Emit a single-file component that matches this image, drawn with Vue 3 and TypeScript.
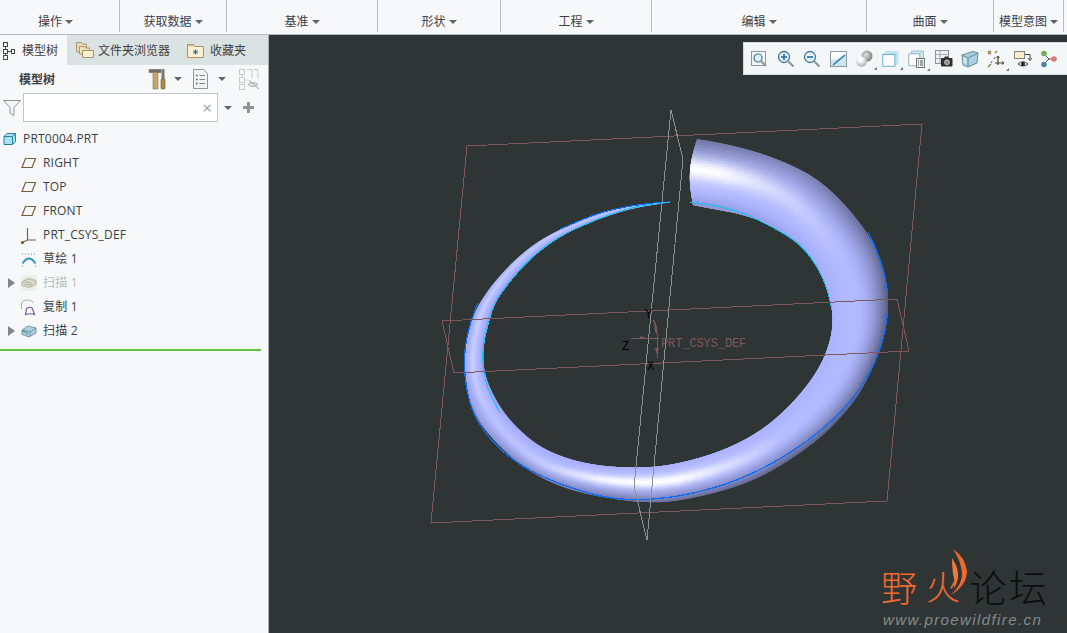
<script setup lang="ts">
// top ribbon groups: label + width up to the next separator
const ribbon = [
  { label: '操作', width: 120 },
  { label: '获取数据', width: 107 },
  { label: '基准', width: 151 },
  { label: '形状', width: 123 },
  { label: '工程', width: 151 },
  { label: '编辑', width: 215 },
  { label: '曲面', width: 127 },
  { label: '模型意图', width: 70 },
]

// ox,oy,ix,iy = outer and inner edge of the tube, hc/ha = highlight centre and strength,
// od/id = how dark the outer and the inner edge get
const stations: number[][] = [
  [670, 201.7, 670, 202.5, 0.5, 0, 0, 0.3],
  [636.7, 204, 636.7, 206.5, 0.4, 0.1, 0, 0.6],
  [603, 211.7, 603, 217, 0.3, 0.15, 0, 0.7],
  [570, 225, 567, 232, 0.3, 0.2, 0, 0.75],
  [543, 237.7, 547, 245, 0.3, 0.2, 0, 0.75],
  [520, 255, 525, 263, 0.3, 0.2, 0, 0.75],
  [500, 275, 510, 282, 0.35, 0.2, 0, 0.75],
  [483, 297, 497, 298, 0.4, 0.25, 0.05, 0.7],
  [475, 312, 491, 313, 0.4, 0.25, 0.1, 0.6],
  [468, 330, 486, 330, 0.45, 0.25, 0.1, 0.6],
  [463, 357, 482, 357, 0.45, 0.25, 0.1, 0.6],
  [465, 383, 485, 380, 0.45, 0.2, 0.2, 0.5],
  [473, 413, 500, 408, 0.5, 0.12, 0.3, 0.35],
  [487, 433, 512, 423, 0.5, 0.1, 0.4, 0.2],
  [510, 457, 533, 443, 0.5, 0.12, 0.5, 0.1],
  [537, 477, 552, 453, 0.5, 0.25, 0.6, 0.1],
  [570, 490, 577, 462, 0.55, 0.55, 0.7, 0.1],
  [603, 498, 606, 467, 0.56, 0.9, 0.75, 0.1],
  [647, 503, 647, 468, 0.57, 1, 0.8, 0.1],
  [673, 502, 673, 465, 0.57, 0.95, 0.85, 0.05],
  [717, 493, 712, 455, 0.58, 0.55, 0.9, 0],
  [757, 480, 745, 441, 0.58, 0.25, 0.95, 0],
  [790, 460, 775, 421, 0.6, 0.05, 1, 0],
  [823, 437, 800, 395, 0.6, 0, 1, 0],
  [847, 410, 815, 375, 0.6, 0, 1, 0],
  [863, 390, 825, 357, 0.6, 0, 1, 0],
  [880, 352, 832, 335, 0.6, 0, 1, 0],
  [887, 323, 833, 318, 0.6, 0, 1, 0],
  [888, 297, 831, 298, 0.6, 0, 1, 0.05],
  [885, 270, 822, 275, 0.6, 0, 0.95, 0.1],
  [875, 245, 808, 252, 0.6, 0.05, 0.9, 0.15],
  [860, 222, 790, 237, 0.55, 0.12, 0.8, 0.25],
  [832, 190, 767, 223, 0.5, 0.25, 0.7, 0.35],
  [808, 173, 745, 215, 0.47, 0.4, 0.6, 0.5],
  [780, 160, 725, 211, 0.45, 0.6, 0.6, 0.6],
  [740, 146, 708, 208, 0.44, 0.95, 0.7, 0.7],
  [697, 139, 693, 205, 0.45, 1, 0.8, 0.7],
]

const BANDS = 24
const SUB = 4

function catmull(a: number, b: number, c: number, d: number, t: number) {
  return 0.5 * (2 * b + (c - a) * t + (2 * a - 5 * b + 4 * c - d) * t * t + (3 * b - a - 3 * c + d) * t * t * t)
}

function resample(rows: number[][], coords: number) {
  const out: number[][] = []
  for (let i = 0; i < rows.length - 1; i++) {
    const p0 = rows[Math.max(i - 1, 0)]
    const p1 = rows[i]
    const p2 = rows[i + 1]
    const p3 = rows[Math.min(i + 2, rows.length - 1)]
    for (let s = 0; s < SUB; s++) {
      const t = s / SUB
      out.push(p1.map((_, k) => (k < coords ? catmull(p0[k], p1[k], p2[k], p3[k], t) : p1[k] + (p2[k] - p1[k]) * t)))
    }
  }
  out.push(rows[rows.length - 1])
  // the measured points are rough, take the lumps out
  for (let pass = 0; pass < 10; pass++) {
    const prev = out.map((r) => r.slice())
    for (let i = 1; i < out.length - 1; i++) {
      for (let k = 0; k < coords; k++) {
        out[i][k] = (prev[i - 1][k] + 2 * prev[i][k] + prev[i + 1][k]) / 4
      }
    }
  }
  return out
}

const dense = resample(stations, 4)

function mix(a: number[], b: number[], t: number) {
  return a.map((c, i) => c + (b[i] - c) * t)
}

function shade(st: number[], v: number) {
  let c = [170, 178, 255]
  const soft = (v - st[4]) / 0.3
  c = mix(c, [198, 204, 255], (0.3 + st[5] * 0.5) * Math.exp(-soft * soft))
  const outer = Math.max(0, 1 - v / 0.55)
  c = mix(c, [92, 97, 132], outer * outer * st[6])
  const inner = Math.max(0, (v - 0.72) / 0.28)
  c = mix(c, [122, 128, 190], inner * inner * st[7])
  const d = (v - st[4]) / 0.15
  c = mix(c, [255, 255, 255], st[5] * Math.exp(-d * d))
  return `rgb(${c.map((n) => Math.round(n)).join(',')})`
}

function at(st: number[], v: number, bulge: number) {
  const x = st[0] + (st[2] - st[0]) * v - bulge * Math.sin(Math.PI * v)
  const y = st[1] + (st[3] - st[1]) * v
  return `${x.toFixed(2)},${y.toFixed(2)}`
}

// the open end of the tube bulges to the left
const bulgeAt = (i: number) => Math.max(0, 5 - (dense.length - 1 - i) * 0.7)

// painted in order, each cell runs under the next one so no seams show through
const quads: { points: string; fill: string }[] = []
for (let i = 0; i < dense.length - 1; i++) {
  const j = Math.min(i + 2, dense.length - 1)
  for (let b = 0; b < BANDS; b++) {
    const v0 = b / BANDS
    const v1 = Math.min(b + 2, BANDS) / BANDS
    const vm = Math.min(b + 1, BANDS) / BANDS
    quads.push({
      points: [
        at(dense[i], v0, bulgeAt(i)),
        at(dense[j], v0, bulgeAt(j)),
        at(dense[j], vm, bulgeAt(j)),
        at(dense[j], v1, bulgeAt(j)),
        at(dense[i], v1, bulgeAt(i)),
        at(dense[i], vm, bulgeAt(i)),
      ].join(' '),
      fill: shade(dense[i], (b + 0.5) / BANDS),
    })
  }
}

function curve(pts: number[][]) {
  return resample(pts, 2).map((p) => `${p[0].toFixed(1)},${p[1].toFixed(1)}`).join(' ')
}

const blueLine = curve([[478, 303], [468, 328], [463, 360], [467, 393], [473, 413], [487, 437], [520, 468], [570, 488], [603, 497], [627, 500], [668, 499], [717, 488], [757, 472], [790, 453], [823, 430], [860, 393], [880, 352], [887, 323], [888, 300], [887, 283], [877, 250], [868, 232]])
const blueTip = curve([[670, 202], [640, 204], [615, 209], [595, 214], [570, 225], [560, 229]])
const cyanLeft = curve([[670, 202], [636, 205.5], [603, 217], [567, 232], [547, 245], [525, 263], [510, 282], [497, 298], [491, 313], [484, 340], [482, 357], [485, 380], [490, 395], [500, 413]])
const cyanRight = curve([[690, 202], [715, 205], [745, 213], [770, 226], [790, 237], [803, 247], [818, 267], [828, 290], [832, 310]])

const tree = [
  { label: 'RIGHT', icon: 'plane' },
  { label: 'TOP', icon: 'plane' },
  { label: 'FRONT', icon: 'plane' },
  { label: 'PRT_CSYS_DEF', icon: 'csys' },
  { label: '草绘 1', icon: 'sketch' },
  { label: '扫描 1', icon: 'sweep', arrow: true, muted: true },
  { label: '复制 1', icon: 'copy' },
  { label: '扫描 2', icon: 'sweep', arrow: true },
]
</script>

<template>
  <div class="app">
    <header class="ribbon">
      <div v-for="g in ribbon" :key="g.label" class="ribbon-group" :style="{ width: g.width + 'px' }">
        <span>{{ g.label }}</span><i class="caret"></i>
      </div>
    </header>

    <div class="body">
      <aside class="panel">
        <div class="tabs">
          <div class="tab active">
            <svg width="15" height="20" viewBox="0 0 15 20" fill="none" stroke="#444" stroke-width="1">
              <rect x="2.5" y="2.5" width="4" height="4" />
              <rect x="2.5" y="9.5" width="4" height="4" />
              <rect x="2.5" y="15.5" width="4" height="4" />
              <rect x="10.5" y="9.5" width="3" height="4" />
              <path d="M4.5 6.500v3M4.500 13.500v2M6.500 11.500h4" />
            </svg>
            <span>模型树</span>
          </div>
          <div class="tab folder-tab">
            <svg width="20" height="20" viewBox="0 0 20 20">
              <path d="M1.500 2.500h5l1 1.500h4v8h-10z" fill="#e9d9ae" stroke="#a89a78" />
              <path d="M4.500 6.500h5l1 1.500h4v6h-10z" fill="#f1e3bd" stroke="#a89a78" />
              <path d="M7.500 10.500h11v7h-11z" fill="#fbf0cf" stroke="#a8926a" />
            </svg>
            <span>文件夹浏览器</span>
          </div>
          <div class="tab fav-tab">
            <svg width="17" height="17" viewBox="0 0 17 17">
              <path d="M0.500 2.500h6l1.500 2h8.500v11h-16z" fill="#fbf1d2" stroke="#a8926a" />
              <path d="M1 3h5.500l1 1.500h-6.500z" fill="#d8c189" />
              <path d="M8.500 7.500v5M6 10h5M6.700 8.200l3.600 3.600M10.300 8.200l-3.600 3.600" stroke="#1b6a8a" stroke-width="0.9" />
            </svg>
            <span>收藏夹</span>
          </div>
        </div>

        <div class="tree-tools">
          <span class="tree-title">模型树</span>
          <svg class="tool-wrench" width="18" height="22" viewBox="0 0 18 22">
            <path d="M1 1.500h12v3h-3v16.500h-5v-16.500h-4z" fill="#c9a468" stroke="#8a7550" stroke-width="0.6" />
            <path d="M1 1.500h12v3h-12z" fill="#6d6d6d" />
            <rect x="13.500" y="1" width="3" height="10" fill="#777" />
            <rect x="13" y="11" width="4" height="10" rx="1" fill="#b48a45" stroke="#6b5530" stroke-width="0.6" />
          </svg>
          <i class="caret tool-caret1"></i>
          <svg class="tool-list" width="17" height="20" viewBox="0 0 17 20">
            <path d="M1.500 0.500h10l4 4v15h-14z" fill="#f0f3f5" stroke="#8d989e" />
            <path d="M4 6.500h1.500M4 10.500h1.500M4 14.500h1.500" stroke="#555" stroke-width="1.400" />
            <path d="M7.500 6.500h5.500M7.500 10.500h5.500M7.500 14.500h5.500" stroke="#7d8b93" />
          </svg>
          <i class="caret tool-caret2"></i>
          <svg class="tool-hide" width="21" height="21" viewBox="0 0 21 21" fill="none" stroke="#c9cccc">
            <rect x="0.500" y="0.500" width="5" height="5" />
            <rect x="0.500" y="8.500" width="5" height="5" />
            <rect x="0.500" y="15.500" width="5" height="5" />
            <path d="M8 0.500h5v9M15 0.500h4v9" />
            <path d="M3 5.500v3M5.500 11h3" />
            <path d="M9 15.500q5-4 10 0q-5 4-10 0z" fill="#e4e6e6" stroke="#a9adad" />
            <path d="M10 11l10 9" stroke="#9aa0a0" />
          </svg>
        </div>

        <div class="filter-row">
          <svg width="18" height="16" viewBox="0 0 18 16" fill="#f4f6f6" stroke="#8d9496">
            <path d="M0.500 0.500h17l-6.500 7v8l-4-2.500v-5.500z" />
          </svg>
          <div class="filter-input"><span class="clear">×</span></div>
          <i class="caret"></i>
          <span class="plus"></span>
        </div>

        <ul class="tree">
          <li class="tree-row root">
            <svg width="14" height="14" viewBox="0 0 14 14">
              <path d="M1 4.500l3-3h8.500v8l-3 3h-8.500z" fill="#a8e2f7" stroke="#2b7f9f" />
              <path d="M1 4.500h8.500v8M9.500 4.500l3-3" fill="none" stroke="#2b7f9f" />
            </svg>
            <span>PRT0004.PRT</span>
          </li>
          <li v-for="item in tree" :key="item.label" class="tree-row" :class="{ muted: item.muted }">
            <i class="expander" :class="{ on: item.arrow }"></i>
            <svg v-if="item.icon === 'plane'" width="16" height="12" viewBox="0 0 16 12" fill="none" stroke="#74603c" stroke-width="1.200">
              <path d="M4.500 1.500h10l-3.500 9h-10z" />
            </svg>
            <svg v-else-if="item.icon === 'csys'" width="16" height="17" viewBox="0 0 16 17" fill="none" stroke="#74603c" stroke-width="1.100">
              <path d="M6.500 1v12M1 15.500l5.500-2.500h8.500" />
              <circle cx="1.500" cy="15.500" r="1" fill="#74603c" />
            </svg>
            <svg v-else-if="item.icon === 'sketch'" width="16" height="16" viewBox="0 0 16 16" fill="none">
              <path d="M1 3h14M1 15h1M14 15h1" stroke="#7c8a90" stroke-dasharray="1 2" />
              <path d="M1.500 12.500q6.500-10 13 0" stroke="#2a93c4" stroke-width="1.800" />
            </svg>
            <svg v-else-if="item.muted" width="16" height="16" viewBox="0 0 16 16" class="muted-icon">
              <rect width="16" height="16" fill="#eceeea" />
              <path d="M1 7l6-3.500 8 2v4l-7 3-7-2z" fill="#d8d8c8" stroke="#b5b5a0" />
              <path d="M4 6.500l6 1.500M3 9l8 1" stroke="#b5b5a0" />
            </svg>
            <svg v-else-if="item.icon === 'copy'" width="16" height="17" viewBox="0 0 16 17" fill="none">
              <path d="M0.500 10v-5q0-3.500 5-4h2q4 .5 4.500 3" stroke="#a8acae" />
              <path d="M4.500 15.500l1-6q3.500-2.500 6 0l2 6q-4.500-1.500-9 0z" stroke="#7d559e" stroke-width="1.200" />
            </svg>
            <svg v-else width="16" height="13" viewBox="0 0 16 13">
              <path d="M1 5l6-4 8 2v5l-7 4-7-2.500z" fill="#a6d2e4" stroke="#72858c" stroke-width="0.800" />
              <path d="M1 5l8 2 6-4M9 7v5" fill="none" stroke="#72858c" stroke-width="0.800" />
              <path d="M1 6l5 1.500v2.500" fill="none" stroke="#2b7f9f" stroke-width="0.800" />
            </svg>
            <span>{{ item.label }}</span>
          </li>
        </ul>
        <div class="tree-end"></div>
      </aside>

      <main class="viewport">
        <svg class="scene" width="798" height="598" viewBox="269 35 798 598">
          <g>
            <polygon v-for="(q, i) in quads" :key="i" :points="q.points" :fill="q.fill" />
          </g>
          <g fill="none" shape-rendering="crispEdges">
            <polyline :points="blueLine" stroke="#0b6ef5" stroke-width="1.300" />
            <polyline :points="blueTip" stroke="#0b6ef5" stroke-width="1.200" />
            <polyline :points="cyanLeft" stroke="#19c2f4" stroke-width="1.100" />
            <polyline :points="cyanRight" stroke="#19c2f4" stroke-width="1.100" />
            <polygon points="467,146 922,124 887,501 431,523" stroke="#7f585c" />
            <polygon points="442,321 897,299 909,351 454,373" stroke="#7f585c" />
            <polygon points="671,110 683,159 647,540 634,487" stroke="#8b9192" />
            <path d="M631 338h28M653 320q4 5 4 14v24" stroke="#7f585c" />
          </g>
          <path d="M640 336l6 2-6 1zM655 348h4l-2 7zM654 323l4 9-3 0z" fill="#7f585c" />
          <text x="661" y="347" class="csys-name">PRT_CSYS_DEF</text>
          <text x="645" y="318" class="axis">Y</text>
          <text x="622" y="350" class="axis">Z</text>
          <text x="647" y="370" class="axis">X</text>
        </svg>

        <div class="view-tools">
          <span class="vt"><svg width="18" height="18" viewBox="0 0 18 18">
            <rect x="1.500" y="1.500" width="14" height="14" fill="#f4f6f8" stroke="#8a99a5" />
            <circle cx="8" cy="8" r="4" fill="#e4f1f8" stroke="#3d7a9a" stroke-width="1.200" />
            <path d="M11 11l5 5" stroke="#8f979c" stroke-width="2" />
          </svg></span>
          <span class="vt"><svg width="18" height="18" viewBox="0 0 18 18">
            <circle cx="7" cy="7" r="5.500" fill="#e4f1f8" stroke="#3d7a9a" stroke-width="1.300" />
            <path d="M4 7h6M7 4v6" stroke="#1d6d96" stroke-width="1.600" />
            <path d="M11 11l5.500 5.500" stroke="#8f979c" stroke-width="2.200" />
          </svg></span>
          <span class="vt"><svg width="18" height="18" viewBox="0 0 18 18">
            <circle cx="7" cy="7" r="5.500" fill="#e4f1f8" stroke="#3d7a9a" stroke-width="1.300" />
            <path d="M4 7h6" stroke="#1d6d96" stroke-width="1.600" />
            <path d="M11 11l5.500 5.500" stroke="#8f979c" stroke-width="2.200" />
          </svg></span>
          <span class="vt"><svg width="17" height="16" viewBox="0 0 17 16">
            <rect width="17" height="16" fill="#8f9a9f" />
            <rect x="1" y="1" width="15" height="14" fill="#fff" />
            <path d="M1 15v-6q8-1 15-6v12z" fill="#cfe3ee" />
            <path d="M3 14l12-10" stroke="#1f7fa8" stroke-width="1.500" />
          </svg></span>
          <span class="vt corner"><svg width="17" height="17" viewBox="0 0 17 17">
            <defs>
              <radialGradient id="ballDark" cx="0.4" cy="0.4" r="0.7">
                <stop offset="0" stop-color="#e2e3e3" />
                <stop offset="1" stop-color="#6f7374" />
              </radialGradient>
              <radialGradient id="ballLight" cx="0.4" cy="0.3" r="0.75">
                <stop offset="0.2" stop-color="#ffffff" />
                <stop offset="1" stop-color="#a9acac" />
              </radialGradient>
            </defs>
            <circle cx="11" cy="6" r="5.500" fill="url(#ballDark)" />
            <circle cx="5.500" cy="11.500" r="5.300" fill="url(#ballLight)" />
          </svg></span>
          <span class="vt corner"><svg width="17" height="17" viewBox="0 0 17 17">
            <path d="M4 1h12.500v12l-3.500 3.500h-12.500v-12z" fill="#bfe3f1" />
            <rect x="0.800" y="4.500" width="12" height="11.800" fill="#fff" stroke="#6fb3cf" />
          </svg></span>
          <span class="vt corner"><svg width="18" height="18" viewBox="0 0 18 18">
            <path d="M3.500 1h12v10h-12z" fill="#cde4ef" stroke="#9cc0d0" />
            <rect x="0.800" y="3.800" width="11" height="12" fill="#fff" stroke="#8fb5c7" />
            <rect x="8.500" y="8.500" width="8" height="9" fill="#eef0f0" stroke="#6f787c" />
            <path d="M10 11h1M12 11h3M10 13h1M12 13h3M10 15h1M12 15h3" stroke="#555" />
          </svg></span>
          <span class="vt"><svg width="18" height="18" viewBox="0 0 18 18">
            <rect x="0.500" y="0.500" width="13" height="13" fill="#eff1f1" stroke="#8d9597" />
            <path d="M0.500 4.500h13M0.500 8.500h13M5 0.500v13" stroke="#a6adae" />
            <rect x="6" y="8" width="11.500" height="8.500" rx="1" fill="#2f2f2f" />
            <rect x="9.500" y="6.500" width="4" height="2" fill="#2f2f2f" />
            <circle cx="12" cy="12.300" r="2.500" fill="#8d8d8d" stroke="#eee" stroke-width="0.600" />
          </svg></span>
          <span class="vt"><svg width="18" height="18" viewBox="0 0 18 18">
            <path d="M1 5l11-3.500 5 1.500-1 10-9 4-5-2z" fill="#a9d1e2" stroke="#6c8a98" />
            <path d="M1 5l6 3-0 9M7 8l10-5" fill="none" stroke="#6c8a98" />
            <path d="M2.500 7l3 1.500v5.500l-3-1.500z" fill="#d8edf5" />
          </svg></span>
          <span class="vt corner"><svg width="18" height="18" viewBox="0 0 18 18" fill="none" stroke="#8a7440">
            <path d="M1 1l3 3M4 1l-3 3M8 3l2-2" stroke-width="1.200" />
            <path d="M7 9l2-3M4 13l2-3" stroke-dasharray="2 1.500" stroke-width="1.200" />
            <path d="M1 17l3-3" stroke-width="1.200" />
            <path d="M11 7v8M8 13l3 0h5" stroke="#4d4020" stroke-width="1.200" />
            <path d="M15 11.500l2 1.500-2 1.500M9.500 8l1.500-2 1.500 2" stroke="#4d4020" />
          </svg></span>
          <span class="vt"><svg width="18" height="18" viewBox="0 0 18 18">
            <rect x="0.500" y="1.500" width="10" height="7" fill="#f7edc9" stroke="#85817a" />
            <path d="M11 4.500h5v5M14 8l2 2.500 2-2.500" fill="none" stroke="#444" />
            <path d="M4 14q5-4.500 10 0q-5 4-10 0z" fill="#fff" stroke="#333" />
            <circle cx="9" cy="14" r="2" fill="#222" />
          </svg></span>
          <span class="vt"><svg width="18" height="18" viewBox="0 0 18 18">
            <path d="M4 4l5 5-5 5M9 9h4" fill="none" stroke="#555" />
            <circle cx="4" cy="3.500" r="2.800" fill="#76ab57" />
            <circle cx="4" cy="14.500" r="2.800" fill="#4b87a8" />
            <circle cx="14" cy="9" r="2.800" fill="#df7a78" />
          </svg></span>
        </div>

        <div class="watermark">
          <svg class="flame" width="24" height="50" viewBox="0 0 24 50">
            <path d="M6 1q12 8 14 22q0 14-16 24q12-12 11-22q-1-12-9-24z" fill="#ee6a2c" />
            <path d="M5 10q7 10 6 20q-1 6-4 10q1-8-1-14q-1-8-1-16z" fill="#f2793a" />
          </svg>
          <div class="wm-title"><span class="wm-hot">野</span><span class="wm-hot wm-fire">火</span><span class="wm-dark">论坛</span></div>
          <div class="wm-url">www.proewildfire.cn</div>
        </div>
      </main>
    </div>
  </div>
</template>

<style>
html,
body {
  margin: 0;
  overflow: hidden;
}
</style>

<style scoped>
.app {
  width: 1067px;
  height: 633px;
  display: flex;
  flex-direction: column;
  overflow: hidden;
  background: #f6f8f9;
  font-family: "Open Sans", "Noto Sans CJK SC", sans-serif;
  font-size: 12px;
  color: #3c4046;
}

/* --- ribbon --- */
.ribbon {
  height: 34px;
  flex: none;
  display: flex;
  border-bottom: 1px solid #b3babb;
  box-sizing: content-box;
}

.ribbon-group {
  box-sizing: border-box;
  height: 32px;
  padding-top: 11px;
  border-right: 1px solid #b9bfc1;
  display: flex;
  justify-content: center;
  align-items: center;
  gap: 3px;
  line-height: 16px;
}

.ribbon-group:first-child {
  padding-right: 8px;
}

.caret {
  display: inline-block;
  width: 0;
  height: 0;
  border-left: 4px solid transparent;
  border-right: 4px solid transparent;
  border-top: 4px solid #5f6668;
}

/* --- left panel --- */
.body {
  flex: 1;
  display: flex;
  min-height: 0;
}

.panel {
  width: 269px;
  flex: none;
  box-sizing: border-box;
  border-right: 1px solid #a9b0b1;
}

.tabs {
  height: 30px;
  display: flex;
  background: #dbe3e2;
}

.tab {
  display: flex;
  align-items: center;
}

.tab.active {
  width: 67px;
  background: #f6f8f9;
  padding-left: 1px;
  box-sizing: border-box;
  gap: 6px;
}

.folder-tab {
  width: 117px;
  padding-left: 8px;
  gap: 3px;
  box-sizing: border-box;
}

.fav-tab {
  padding-left: 3px;
  gap: 6px;
}

.tree-tools {
  height: 28px;
  position: relative;
  display: flex;
  align-items: center;
  padding-left: 19px;
}

.tree-title {
  font-weight: 700;
  width: 129px;
}

.tool-wrench {
  margin-right: 8px;
}

.tool-caret1 {
  margin-right: 10px;
}

.tool-list {
  margin-right: 9px;
}

.tool-caret2 {
  margin-right: 13px;
}

.filter-row {
  height: 29px;
  display: flex;
  align-items: center;
  padding-left: 3px;
}

.filter-input {
  width: 195px;
  height: 29px;
  margin: 0 6px 0 2px;
  box-sizing: border-box;
  border: 1px solid #c2c6c6;
  background: #fff;
  display: flex;
  align-items: center;
  justify-content: flex-end;
}

.clear {
  font-size: 17px;
  color: #9a9fa1;
  margin-right: 5px;
  line-height: 20px;
}

.plus {
  width: 11px;
  height: 11px;
  margin-left: 11px;
  background:
    linear-gradient(#8f9597, #8f9597) center / 11px 3px no-repeat,
    linear-gradient(#8f9597, #8f9597) center / 3px 11px no-repeat;
}

.tree {
  list-style: none;
  margin: 5px 0 0;
  padding: 0;
  width: 261px;
  letter-spacing: 0.2px;
}

.tree-row {
  height: 24px;
  display: flex;
  align-items: center;
  padding-left: 8px;
  gap: 6px;
  line-height: 24px;
}

.tree-row > svg {
  flex: none;
}

.tree-row.root {
  padding-left: 3px;
}

.tree-row.muted span {
  color: #b9bdbd;
}

.expander {
  width: 7px;
  height: 10px;
  flex: none;
}

.expander.on {
  width: 0;
  height: 0;
  border-left: 7px solid #7f8789;
  border-top: 5px solid transparent;
  border-bottom: 5px solid transparent;
}

.tree-end {
  width: 261px;
  height: 2px;
  margin-top: 6px;
  background: #65c143;
}

/* --- 3D view --- */
.viewport {
  flex: 1;
  position: relative;
  background: #2f3535;
  overflow: hidden;
}

.scene {
  display: block;
}

.csys-name {
  font-family: "Liberation Mono", monospace;
  font-size: 12px;
  fill: #7f585c;
  letter-spacing: -0.1px;
}

.axis {
  font-family: "Liberation Mono", monospace;
  font-size: 12px;
  fill: #000;
}

.view-tools {
  position: absolute;
  left: 474px;
  top: 7px;
  right: 0;
  height: 33px;
  padding-left: 2px;
  box-sizing: border-box;
  background: #f4f7f8;
  border: 1px solid #d7dcdd;
  border-right: 0;
  display: flex;
  align-items: center;
}

.vt {
  width: 26.36px;
  flex: none;
  display: flex;
  justify-content: center;
  position: relative;
}

.corner::after {
  content: "";
  position: absolute;
  right: 1px;
  bottom: -3px;
  border-left: 3px solid transparent;
  border-bottom: 3px solid #6c7274;
}

.watermark {
  position: absolute;
  left: 612px;
  top: 510px;
  width: 180px;
  height: 84px;
}

.flame {
  position: absolute;
  left: 66px;
  top: 3px;
}

.wm-title {
  position: absolute;
  left: 0;
  top: 16px;
  font-family: "Noto Sans CJK SC", sans-serif;
  font-weight: 300;
  font-size: 36px;
  line-height: 50px;
  white-space: nowrap;
  display: flex;
}

.wm-hot {
  color: #f2692e;
}

.wm-fire {
  margin-left: 9px;
  margin-right: 9px;
  font-size: 34px;
}

.wm-dark {
  color: #0d0f0f;
  font-size: 38px;
  letter-spacing: 2px;
}

.wm-url {
  position: absolute;
  left: 2px;
  top: 66px;
  font-family: "Liberation Sans", sans-serif;
  font-style: italic;
  font-size: 15px;
  letter-spacing: 1.4px;
  color: #868c8c;
  white-space: nowrap;
}
</style>
